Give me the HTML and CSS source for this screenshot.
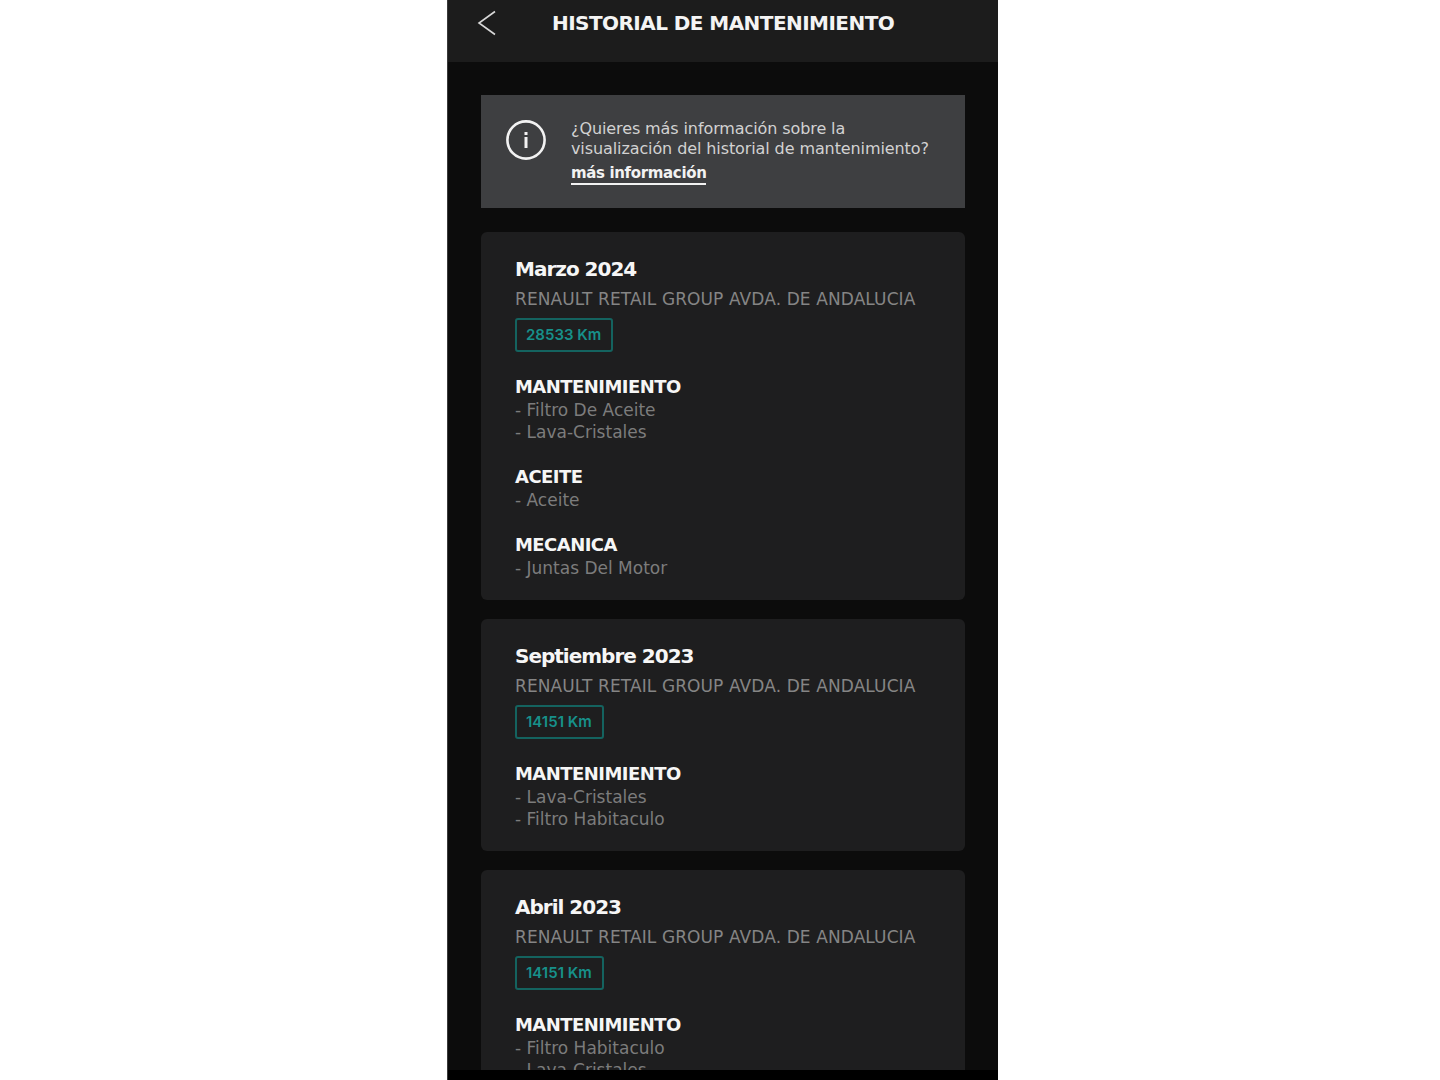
FILE: index.html
```html
<!DOCTYPE html>
<html lang="es">
<head>
  <meta charset="UTF-8" />
  <meta name="viewport" content="width=device-width, initial-scale=1.0"/>
  <title>Historial de mantenimiento</title>
  <link rel="stylesheet" href="styles.css">
</head>
<body>
  <div class="phone">
    <!-- Header -->
    <header class="topbar">
      <svg class="back-icon" width="20" height="26" viewBox="0 0 20 26" fill="none" stroke="#d8d8d8" stroke-width="1.6">
        <path d="M18 1.5 L2 13 L18 24.5"/>
      </svg>
      <h1>HISTORIAL DE MANTENIMIENTO</h1>
    </header>

    <main class="content">
      <div class="info-box">
        <svg class="info-icon" width="40" height="40" viewBox="0 0 40 40" fill="none">
          <circle cx="20" cy="20" r="18.6" stroke="#f2f2f2" stroke-width="2.6"/>
          <rect x="18.5" y="17" width="3" height="11" fill="#f2f2f2"/>
          <rect x="18.5" y="12" width="3" height="3" fill="#f2f2f2"/>
        </svg>
        <div class="info-text">
          <p>¿Quieres más información sobre la<br>visualización del historial de mantenimiento?</p>
          <a href="#">más información</a>
        </div>
      </div>

      <section class="card">
        <h2>Marzo 2024</h2>
        <div class="dealer">RENAULT RETAIL GROUP AVDA. DE ANDALUCIA</div>
        <span class="km">28533 Km</span>
        <div class="group">
          <h3>MANTENIMIENTO</h3>
          <div class="item">- Filtro De Aceite</div>
          <div class="item">- Lava-Cristales</div>
        </div>
        <div class="group">
          <h3>ACEITE</h3>
          <div class="item">- Aceite</div>
        </div>
        <div class="group">
          <h3>MECANICA</h3>
          <div class="item">- Juntas Del Motor</div>
        </div>
      </section>

      <section class="card">
        <h2>Septiembre 2023</h2>
        <div class="dealer">RENAULT RETAIL GROUP AVDA. DE ANDALUCIA</div>
        <span class="km">14151 Km</span>
        <div class="group">
          <h3>MANTENIMIENTO</h3>
          <div class="item">- Lava-Cristales</div>
          <div class="item">- Filtro Habitaculo</div>
        </div>
      </section>

      <section class="card">
        <h2>Abril 2023</h2>
        <div class="dealer">RENAULT RETAIL GROUP AVDA. DE ANDALUCIA</div>
        <span class="km">14151 Km</span>
        <div class="group">
          <h3>MANTENIMIENTO</h3>
          <div class="item">- Filtro Habitaculo</div>
          <div class="item">- Lava-Cristales</div>
        </div>
      </section>
    </main>

    <div class="bottom-strip"></div>
  </div>
</body>
</html>
```

FILE: styles.css
```css
* {
  box-sizing: border-box;
}

html, body {
  margin: 0;
  padding: 0;
  height: 1080px;
  overflow: hidden;
  background: #fff;
  font-family: 'DejaVu Sans', sans-serif;
}

.phone {
  width: 551px;
  height: 1080px;
  margin-left: 447px;
  background: #0c0c0c;
  border-left: 1px solid #3a3a3a;
  display: flex;
  flex-direction: column;
  overflow: hidden;
}

.topbar {
  flex: none;
  height: 62px;
  background: #1c1c1c;
  display: flex;
  align-items: flex-start;
  padding: 10px 0 0 29px;
}

.back-icon {
  flex: none;
}

.topbar h1 {
  margin: 0 0 0 55px;
  color: #f4f4f4;
  font-size: 20px;
  line-height: 26px;
  font-weight: 700;
  letter-spacing: -0.55px;
  white-space: nowrap;
}

.content {
  flex: 1;
  min-height: 0;
  overflow: hidden;
  padding: 33px 33px 0;
  display: flex;
  flex-direction: column;
  gap: 19px;
}

.info-box {
  flex: none;
  height: 113px;
  margin-bottom: 5px;
  background: #3e3f41;
  display: flex;
  align-items: flex-start;
  padding: 24px 0 0 25px;
}

.info-icon {
  flex: none;
  margin-top: 1px;
}

.info-text {
  margin-left: 25px;
  color: #d2d2d2;
  font-size: 16px;
  line-height: 20px;
  letter-spacing: -0.1px;
  white-space: nowrap;
}

.info-text p {
  margin: 0;
}

.info-text a {
  display: inline-block;
  margin-top: 5px;
  font-size: 15px;
  color: #f2f2f2;
  font-weight: 700;
  line-height: 19px;
  letter-spacing: -0.35px;
  border-bottom: 2px solid #f2f2f2;
  text-decoration: none;
}

.card {
  flex: none;
  background: #1e1e1f;
  border-radius: 6px;
  padding: 23px 34px 21px;
}

.card h2 {
  margin: 0;
  color: #f6f6f6;
  font-size: 20px;
  line-height: 28px;
  font-weight: 700;
  letter-spacing: -1px;
}

.dealer {
  margin-top: 6px;
  color: #858585;
  font-size: 17px;
  line-height: 20px;
  letter-spacing: 0.1px;
  white-space: nowrap;
}

.km {
  display: block;
  width: fit-content;
  margin-top: 9px;
  height: 34px;
  padding: 0 10px 0 9px;
  border: 2px solid #14635f;
  border-radius: 3px;
  color: #17908a;
  font-family: Inter, sans-serif;
  font-size: 15px;
  font-weight: 600;
  line-height: 30px;
}

.group {
  margin-top: 23px;
}

.km + .group {
  margin-top: 24px;
}

.group h3 {
  margin: 0 0 1px;
  color: #f6f6f6;
  font-size: 18px;
  line-height: 22px;
  font-weight: 700;
  letter-spacing: -0.55px;
}

.item {
  color: #7c7c7c;
  font-size: 17px;
  line-height: 22px;
}

.bottom-strip {
  flex: none;
  height: 10px;
  background: #000;
}
```
